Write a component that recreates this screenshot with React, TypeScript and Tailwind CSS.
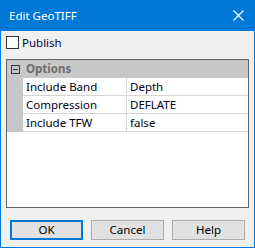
const FONT = "font-['Noto_Sans','Open_Sans',sans-serif]"

const ROWS: [string, string][] = [
  ['Include Band', 'Depth'],
  ['Compression', 'DEFLATE'],
  ['Include TFW', 'false'],
]

function DialogButton({ label, primary }: { label: string; primary?: boolean }) {
  return (
    <div
      className={`flex h-[20px] w-[73px] items-center justify-center bg-[#e1e1e1] text-[11.5px] text-black ${
        primary ? 'border-2 border-[#0078d7]' : 'border border-[#adadad]'
      }`}
    >
      {label}
    </div>
  )
}

export default function App() {
  return (
    <div className={`flex h-[248px] w-[255px] flex-col border border-t-0 border-[#0078d7] bg-[#f0f0f0] ${FONT}`}>
      {/* Title bar */}
      <div className="-mx-px flex h-[31px] shrink-0 items-center justify-between bg-[#0078d7] pl-[9px] pr-[11px] text-white">
        <span className="text-[11.5px] leading-none">Edit GeoTIFF</span>
        <svg width="11" height="11" viewBox="0 0 11 11">
          <path d="M0.5 0.5 L10.5 10.5 M10.5 0.5 L0.5 10.5" stroke="white" strokeWidth="1.2" />
        </svg>
      </div>

      {/* Publish checkbox */}
      <div className="mt-[5px] flex items-center gap-[3px] pl-[5px]">
        <div className="h-[13px] w-[13px] border border-[#333333] bg-white" />
        <span className="text-[11.5px] leading-[13px] text-[#000040]">Publish</span>
      </div>

      {/* Property grid */}
      <div className="ml-[5px] mt-[10px] flex h-[149px] w-[243px] flex-col border border-[#646464] bg-white">
        <div className="flex h-[18px] items-center bg-[#c8c8c8]">
          <div className="flex w-[16px] justify-center">
            <svg width="9" height="9" viewBox="0 0 9 9">
              <rect x="0.5" y="0.5" width="8" height="8" fill="none" stroke="#333333" />
              <path d="M2 4.5 H7" stroke="#333333" />
            </svg>
          </div>
          <span className="pl-[3px] text-[11.5px] font-bold text-[#6d6d6d]">Options</span>
        </div>
        {ROWS.map(([name, value]) => (
          <div key={name} className="flex h-[18px]">
            <div className="w-[16px] shrink-0 bg-[#c8c8c8]" />
            <div className="flex w-[104px] items-center border-b border-r border-[#d6d6d6] pl-[3px] text-[11.5px] text-[#000020]">
              {name}
            </div>
            <div className="flex flex-1 items-center border-b border-[#d6d6d6] pl-[3px] text-[11.5px] text-[#000020]">
              {value}
            </div>
          </div>
        ))}
      </div>

      {/* Buttons */}
      <div className="mt-[12px] flex gap-[8px] pl-[9px]">
        <DialogButton label="OK" primary />
        <DialogButton label="Cancel" />
        <DialogButton label="Help" />
      </div>
    </div>
  )
}
